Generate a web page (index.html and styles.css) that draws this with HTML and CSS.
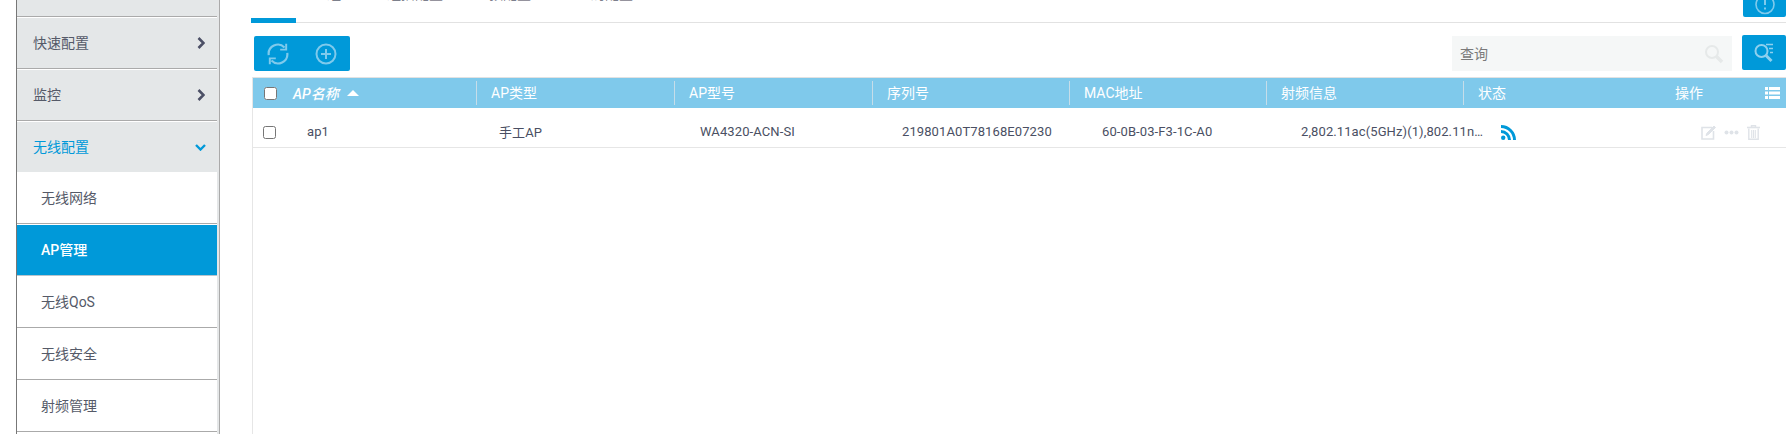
FILE: index.html
```html
<!DOCTYPE html>
<html lang="zh">
<head>
<meta charset="utf-8">
<title>AP管理</title>
<link rel="stylesheet" href="styles.css">
</head>
<body>
<div class="page">
  <aside class="sidebar">
    <div class="menu-item top-cut"></div>
    <div class="menu-item"><span>快速配置</span><svg class="chev" width="8" height="12" viewBox="0 0 8 12"><path d="M1.5 1l5 5-5 5" fill="none" stroke="#4c5066" stroke-width="2.6"/></svg></div>
    <div class="menu-item"><span>监控</span><svg class="chev" width="8" height="12" viewBox="0 0 8 12"><path d="M1.5 1l5 5-5 5" fill="none" stroke="#4c5066" stroke-width="2.6"/></svg></div>
    <div class="menu-item open"><span>无线配置</span><svg class="chev-down" width="11" height="7" viewBox="0 0 11 7"><path d="M1 1l4.500 4.500L10 1" fill="none" stroke="#0099d9" stroke-width="2.4"/></svg></div>
    <div class="sub-item">无线网络</div>
    <div class="sub-item active">AP管理</div>
    <div class="sub-item">无线QoS</div>
    <div class="sub-item">无线安全</div>
    <div class="sub-item">射频管理</div>
  </aside>
  <main class="main">
    <div class="tabs">
      <div class="tab tab-active"><span>AP</span></div>
      <div class="tab"><span>AP组</span></div>
      <div class="tab"><span>组播配置</span></div>
      <div class="tab"><span>预配置</span></div>
      <div class="tab"><span>全局配置</span></div>
      <div class="help-btn"><svg width="20" height="17" viewBox="0 0 20 17"><circle cx="10" cy="4.500" r="9" fill="none" stroke="#7fcaec" stroke-width="1.6"/><path d="M10 0v5M10 7.500v2" stroke="#7fcaec" stroke-width="2" fill="none"/></svg></div>
    </div>
    <div class="toolbar">
      <div class="btn-group">
        <button class="icon-btn" type="button"><svg width="24" height="24" viewBox="0 0 22 22" fill="none" stroke="#7fcaec" stroke-width="2"><path d="M2.500 12A8.500 8.500 0 0 1 17 5"/><path d="M19.500 10A8.500 8.500 0 0 1 5 17"/><path d="M18.500 1.500V7h-5.500" stroke-width="1.800"/><path d="M3.500 20.500V15H9" stroke-width="1.800"/></svg></button>
        <button class="icon-btn" type="button"><svg width="22" height="22" viewBox="0 0 22 22" fill="none" stroke="#7fcaec" stroke-width="2"><circle cx="11" cy="11" r="9.500"/><path d="M11 6v10M6 11h10"/></svg></button>
      </div>
      <div class="search">
        <span class="search-label">查询</span>
        <svg width="20" height="20" viewBox="0 0 20 20" fill="none" stroke="#e6e9e9"><circle cx="8" cy="8" r="6" stroke-width="2"/><path d="M12.500 12.500L18 18" stroke-width="3.500"/></svg>
      </div>
      <button class="adv-btn" type="button"><svg width="20" height="20" viewBox="0 0 20 20" fill="none" stroke="#8ed0ee"><circle cx="7.500" cy="8" r="6" stroke-width="2"/><path d="M12 12.500L17.500 18" stroke-width="3"/><path d="M12 1.500h7M15 5.500h4M16 9.500h3" stroke-width="1.500"/></svg></button>
    </div>
    <div class="table">
      <div class="thead">
        <div class="th-first"><input type="checkbox"><em>AP名称</em><i class="sort"></i></div>
        <div class="th">AP类型</div>
        <div class="th">AP型号</div>
        <div class="th">序列号</div>
        <div class="th">MAC地址</div>
        <div class="th">射频信息</div>
        <div class="th th-last"><span>状态</span><span class="ops">操作</span>
          <svg class="list-icon" width="15" height="12" viewBox="0 0 15 12" fill="#fff"><path d="M0 0h3v3H0zM4 0h11v3H4zM0 4.500h3v3H0zM4 4.500h11v3H4zM0 9h3v3H0zM4 9h11v3H4z"/></svg>
        </div>
      </div>
      <div class="row">
        <div class="td-first"><input type="checkbox"><span>ap1</span></div>
        <div class="td">手工AP</div>
        <div class="td">WA4320-ACN-SI</div>
        <div class="td">219801A0T78168E07230</div>
        <div class="td">60-0B-03-F3-1C-A0</div>
        <div class="td radio">2,802.11ac(5GHz)(1),802.11n(2.4GHz)(2)</div>
        <div class="td-last">
          <svg width="15" height="15" viewBox="0 0 15 15" fill="none" stroke="#0099d9" stroke-width="3"><circle cx="2.200" cy="12.800" r="2.200" fill="#0099d9" stroke="none"/><path d="M0 6.500A8.500 8.500 0 0 1 8.500 15"/><path d="M0 1.500A13.500 13.500 0 0 1 13.500 15"/></svg>
          <div class="actions">
            <svg width="15" height="15" viewBox="0 0 15 15" fill="none" stroke="#dfe3e8" stroke-width="1.600"><path d="M11 2.500H1v11.500h11.500V6"/><path d="M5 10.500l1-2.500 7-7 1.500 1.500-7 7z" fill="#dfe3e8" stroke-width="1"/></svg>
            <svg width="15" height="5" viewBox="0 0 15 5" fill="#dfe3e8"><circle cx="2.500" cy="2.500" r="2"/><circle cx="7.500" cy="2.500" r="2"/><circle cx="12.500" cy="2.500" r="2"/></svg>
            <svg width="13" height="15" viewBox="0 0 13 15" fill="none" stroke="#dfe3e8"><path d="M0 2.500h13" stroke-width="1.600"/><path d="M4.500 2V.8h4V2" stroke-width="1.400"/><path d="M1.800 3.500V14.300h9.400V3.500" stroke-width="1.400"/><path d="M4.700 5v8M6.500 5v8M8.300 5v8" stroke-width="1.100"/></svg>
          </div>
        </div>
      </div>
      <div class="table-rest"></div>
    </div>
  </main>
</div>
</body>
</html>
```
FILE: styles.css
```css
* { box-sizing: border-box; }
html, body { margin: 0; height: 434px; overflow: hidden; background: #fff; }
body {
  font-family: Roboto, "Noto Sans CJK SC", sans-serif;
  font-size: 14px;
  color: #4a4f63;
}
.page { display: flex; height: 434px; background: #fff; }

.sidebar {
  flex: none;
  width: 204px;
  margin-left: 16px;
  padding-right: 2px;
  height: 434px;
  border-left: 1px solid #777;
  border-right: 1px solid #aaa;
  background: linear-gradient(#e5e7e8, #e5e7e8) right / 2px 100% no-repeat #fff;
  overflow: hidden;
}
.menu-item {
  height: 52px;
  display: flex;
  align-items: center;
  justify-content: space-between;
  padding: 0 12px 0 16px;
  background: #e4e7e8;
  border-top: 1px solid #fff;
  border-bottom: 1px solid #aaa;
  color: #555a68;
}
.menu-item span { margin-bottom: 2px; }
.top-cut { height: 17px; border-top: 0; }
.open { color: #0099d9; border-bottom: 0; height: 51px; padding-right: 11px; }
.sub-item {
  height: 52px;
  display: flex;
  align-items: center;
  padding: 0 0 2px 24px;
  background: #fff;
  border-top: 1px solid #fff;
  border-bottom: 1px solid #aaa;
  color: #555a68;
}
.active {
  background: #0099d9;
  color: #fff;
  font-weight: 500;
  border-bottom-color: #b8c4cc;
}

.main { flex: 1; min-width: 0; padding-left: 31px; }

.tabs { display: flex; height: 23px; border-bottom: 1px solid #e2e2e2; position: relative; }
.tab { height: 23px; padding: 0 23px; color: #7d808c; }
.tab span { display: block; line-height: 20px; margin-top: -16px; white-space: nowrap; }
.tab-active { width: 45px; padding: 0 12px; margin-right: -10px; border-bottom: 5px solid #0099d9; }
.help-btn {
  position: absolute;
  right: 0;
  top: 0;
  width: 43px;
  height: 17px;
  background: #0099d9;
  border-radius: 0 0 2px 2px;
  display: flex;
  justify-content: center;
}

.toolbar { display: flex; align-items: flex-start; margin-top: 13px; padding-left: 3px; }
.btn-group { display: flex; width: 96px; height: 35px; background: #0099d9; border-radius: 2px; }
.icon-btn { flex: 1; border: 0; padding: 0; background: none; display: flex; align-items: center; justify-content: center; }
.search {
  margin-left: auto;
  width: 280px;
  height: 35px;
  background: #f5f7f7;
  display: flex;
  align-items: center;
  justify-content: space-between;
  padding: 0 8px;
  color: #7a7a7a;
}
.search-label { margin-bottom: 2px; }
.adv-btn {
  width: 44px;
  height: 35px;
  margin: -1px 0 0 10px;
  border: 0;
  padding: 0;
  background: #0099d9;
  border-radius: 2px;
  display: flex;
  align-items: center;
  justify-content: center;
}

.table { margin: 6px 0 0 1px; border-left: 1px solid #e6e6e6; height: 357px; display: flex; flex-direction: column; }
.thead {
  flex: none;
  display: grid;
  grid-template-columns: 223px 198px 198px 197px 197px 197px 1fr;
  align-items: center;
  height: 31px;
  border-top: 1px solid #e2e2e2;
  background: #7fc9eb;
  color: #fff;
}
.th-first { display: flex; align-items: center; padding-left: 11px; }
.th-first input { margin: 1px 16px 0 0; }
.th-first em { font-style: italic; font-weight: 500; }
.sort {
  margin-left: 8px;
  border-left: 6px solid transparent;
  border-right: 6px solid transparent;
  border-bottom: 6px solid #fff;
}
.th {
  height: 24px;
  line-height: 24px;
  padding-left: 14px;
  border-left: 1px solid #c6dde9;
}
.th-last { display: flex; align-items: center; }
.ops { margin-left: 169px; }
.list-icon { margin-left: 62px; }

.row {
  flex: none;
  display: grid;
  grid-template-columns: 246px 201px 202px 200px 199px 200px 1fr;
  align-items: center;
  height: 40px;
  padding-top: 7px;
  border-bottom: 1px solid #e6e6e6;
}
.td, .td-first span {
  font-size: 13px;
  letter-spacing: 0.1px;
  white-space: nowrap;
}
.td-first { display: flex; align-items: center; padding-left: 10px; }
.td-first input { margin: 3px 31px 0 0; }
.radio { width: 186px; overflow: hidden; text-overflow: ellipsis; }
.td-last { display: flex; align-items: center; justify-content: space-between; padding-right: 26px; margin-top: 2px; }
.actions { display: flex; align-items: center; gap: 8px; }
.table-rest { flex: 1; }
```
